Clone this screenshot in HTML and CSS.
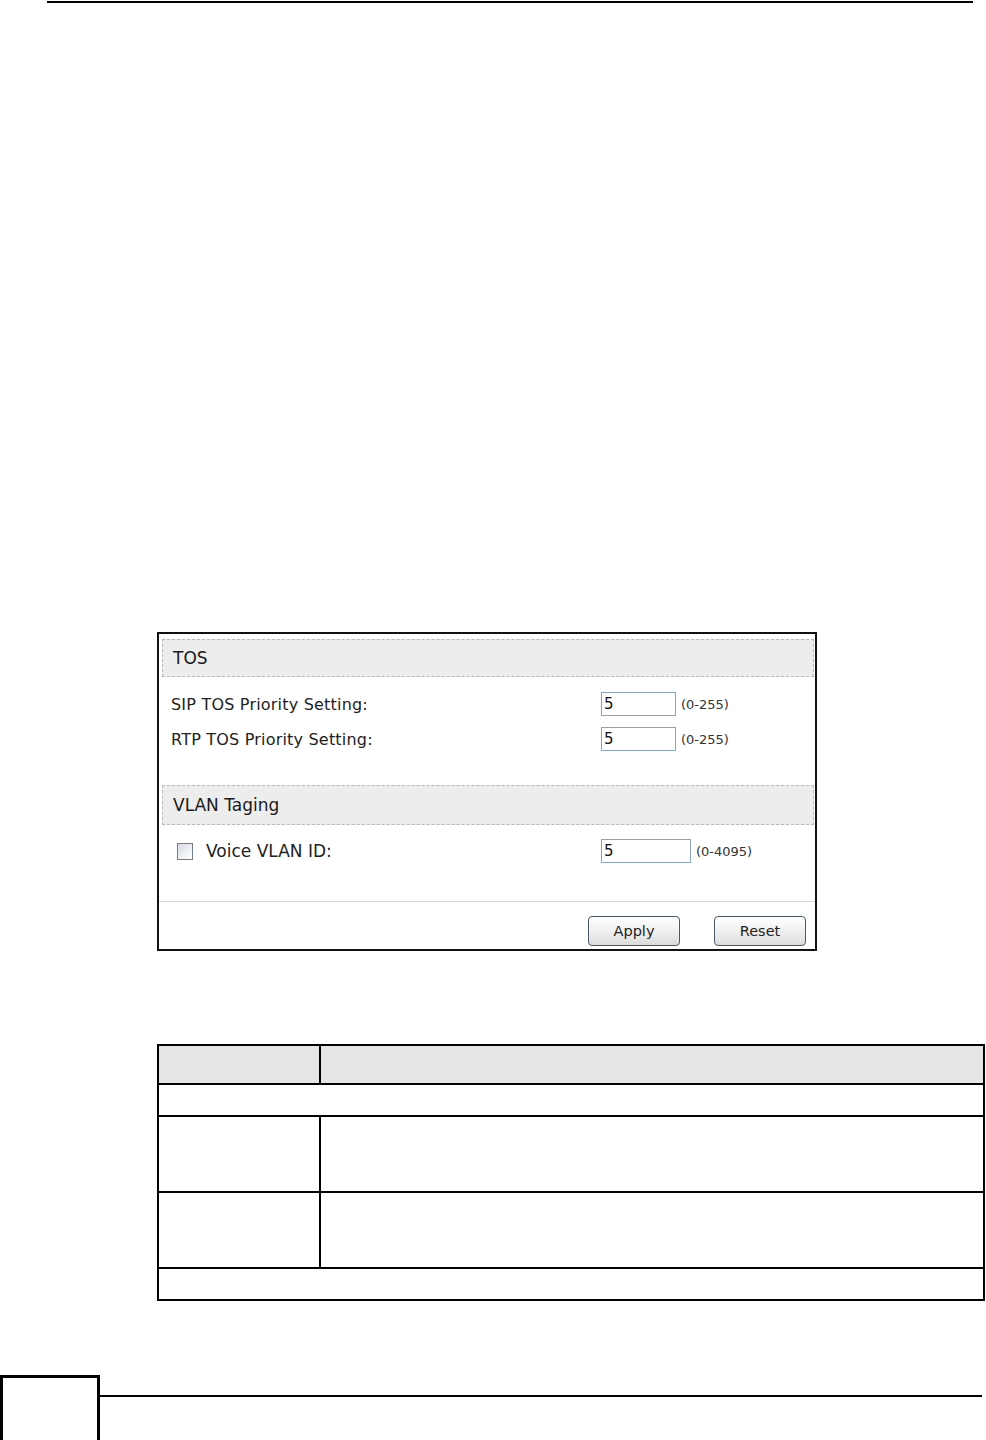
FILE: index.html
```html
<!DOCTYPE html>
<html lang="en">
<head>
    <meta charset="UTF-8">
    <meta name="viewport" content="width=device-width, initial-scale=1.0">
    <title>TOS / VLAN Settings</title>
    <link rel="stylesheet" href="styles.css">
</head>
<body>
    <div class="page">
        <div class="top-rule"></div>

        <div class="screen">
            <div class="section-head">TOS</div>

            <div class="fields">
                <div class="field-row">
                    <label class="field-label" for="sip-tos">SIP TOS Priority Setting:</label>
                    <input class="field-input" id="sip-tos" type="text" value="5">
                    <span class="field-range">(0-255)</span>
                </div>
                <div class="field-row">
                    <label class="field-label" for="rtp-tos">RTP TOS Priority Setting:</label>
                    <input class="field-input" id="rtp-tos" type="text" value="5">
                    <span class="field-range">(0-255)</span>
                </div>
            </div>

            <div class="section-head vlan-head">VLAN Taging</div>

            <div class="fields">
                <div class="field-row check-row">
                    <label class="field-label" for="voice-vlan">
                        <span class="check-box"></span>
                        Voice VLAN ID:
                    </label>
                    <input class="field-input wide" id="voice-vlan" type="text" value="5">
                    <span class="field-range">(0-4095)</span>
                </div>
            </div>

            <div class="button-bar">
                <button class="ui-button">Apply</button>
                <button class="ui-button">Reset</button>
            </div>
        </div>

        <table class="desc-table">
            <tr class="head-row">
                <th class="col-label"></th>
                <th></th>
            </tr>
            <tr class="span-row">
                <td colspan="2"></td>
            </tr>
            <tr class="tall-row">
                <td></td>
                <td></td>
            </tr>
            <tr class="tall-row">
                <td></td>
                <td></td>
            </tr>
            <tr class="span-row">
                <td colspan="2"></td>
            </tr>
        </table>

        <div class="page-footer">
            <div class="page-number"></div>
            <div class="footer-rule"></div>
        </div>
    </div>
</body>
</html>
```

FILE: styles.css
```css
* {
    margin: 0;
    padding: 0;
    box-sizing: border-box;
}

body {
    background: #fff;
    font-family: "DejaVu Sans", Verdana, sans-serif;
    color: #222;
}

.page {
    width: 986px;
    min-height: 1440px;
    display: flex;
    flex-direction: column;
}

.top-rule {
    margin: 1px 13px 0 47px;
    border-top: 2px solid #000;
}

/* screenshot panel */
.screen {
    margin: 629px 0 0 157px;
    width: 660px;
    height: 319px;
    border: 2px solid #111;
    display: flex;
    flex-direction: column;
}

.section-head {
    margin: 5px 1px 0 3px;
    height: 38px;
    padding-left: 10px;
    line-height: 36px;
    font-size: 17px;
    background: #ededed;
    border: 1px dashed #b8b8b8;
    color: #1a1a1a;
}

.vlan-head {
    margin-top: 34px;
    height: 40px;
    line-height: 38px;
}

.fields {
    display: flex;
    flex-direction: column;
    gap: 11px;
    margin-top: 15px;
    padding-left: 12px;
}

.vlan-head + .fields {
    margin-top: 14px;
}

.field-row {
    display: flex;
    align-items: center;
    height: 24px;
}

.field-label {
    width: 430px;
    font-size: 16px;
    letter-spacing: 0.2px;
    color: #222;
    display: flex;
    align-items: center;
}

.check-row .field-label {
    padding-left: 6px;
    font-size: 17px;
    letter-spacing: 0;
}

.check-box {
    width: 16px;
    height: 17px;
    margin-right: 13px;
    border: 1px solid #6f7f8f;
    background: linear-gradient(135deg, #d6dbe2 0%, #f4f5f7 70%, #fff 100%);
}

.field-input {
    width: 75px;
    height: 24px;
    border: 1px solid #8aa4bd;
    padding: 0 2px;
    font-family: inherit;
    font-size: 15px;
    color: #111;
    background: #fff;
}

.field-input.wide {
    width: 90px;
}

.field-range {
    margin-left: 5px;
    font-size: 13px;
    color: #333;
}

.button-bar {
    margin-top: 38px;
    border-top: 1px solid #d8d8d8;
    display: flex;
    justify-content: flex-end;
    gap: 34px;
    padding: 14px 9px 0 0;
}

.ui-button {
    width: 92px;
    height: 30px;
    border: 1px solid #4a5866;
    border-radius: 4px;
    background: linear-gradient(#ffffff 0%, #f0f0f0 50%, #dcdcdc 100%);
    font-family: inherit;
    font-size: 14.5px;
    color: #222;
}

/* field description table */
.desc-table {
    margin: 93px 0 0 157px;
    width: 828px;
    border-collapse: collapse;
}

.desc-table th,
.desc-table td {
    border: 2px solid #000;
}

.desc-table th {
    background: #e6e6e6;
}

.col-label {
    width: 162px;
}

.head-row {
    height: 39px;
}

.span-row {
    height: 32px;
}

.tall-row {
    height: 76px;
}

/* footer */
.page-footer {
    margin-top: auto;
    height: 65px;
    display: flex;
    align-items: flex-start;
}

.page-number {
    width: 100px;
    height: 68px;
    border: 3px solid #000;
}

.footer-rule {
    flex: 1;
    margin: 20px 4px 0 0;
    border-top: 2px solid #000;
}
```
